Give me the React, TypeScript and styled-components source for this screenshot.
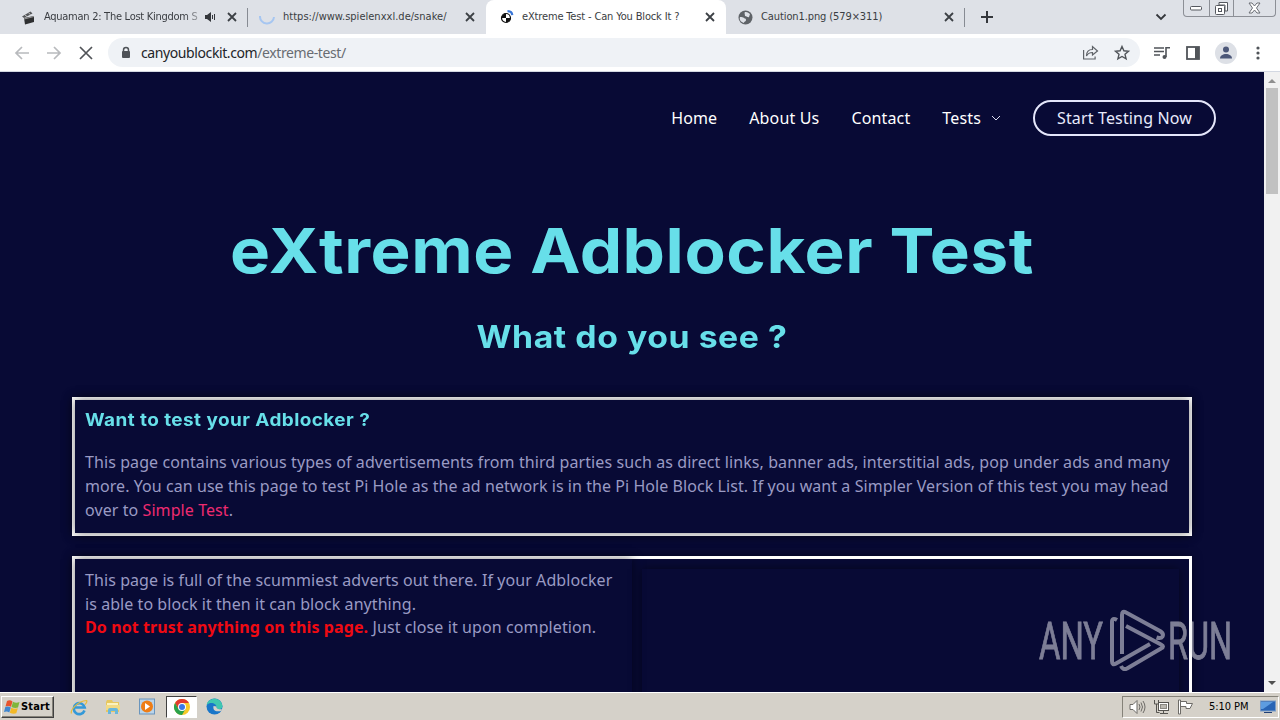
import * as React from 'react'
import styled, { createGlobalStyle } from 'styled-components'

const GlobalStyle = createGlobalStyle`
    * { box-sizing: border-box; }
    html, body { margin: 0; padding: 0; overflow: hidden; }
    body { font-family: 'Noto Sans', sans-serif; }
`

const Screen = styled.div`
    display: flex;
    flex-direction: column;
    width: 1280px;
    height: 720px;
    overflow: hidden;
    background: #080a35;
`

const TabStrip = styled.div`
    display: flex;
    height: 34px;
    flex: none;
    background: #dee1e7;
`

const Tab = styled.div<{ $width: number; $left?: number; $active?: boolean; $divider?: boolean }>`
    position: relative;
    display: flex;
    align-items: center;
    width: ${p => p.$width}px;
    height: 34px;
    padding: 0 11px 0 ${p => p.$left ?? 12}px;
    background: ${p => (p.$active ? '#fff' : 'transparent')};
    border-radius: ${p => (p.$active ? '8px 8px 0 0' : '0')};

    &::after {
        content: '';
        display: ${p => (p.$divider ? 'block' : 'none')};
        position: absolute;
        right: 0;
        top: 8px;
        width: 1px;
        height: 19px;
        background: #878b93;
    }
`

const TabTitle = styled.span<{ $spacing?: number; $fade?: boolean }>`
    flex: 1;
    margin-left: 8px;
    overflow: hidden;
    white-space: nowrap;
    font: 11px/20px 'DejaVu Sans Condensed', 'DejaVu Sans', sans-serif;
    letter-spacing: ${p => p.$spacing ?? 0}px;
    color: #3a3d42;
    ${p => p.$fade && 'mask-image: linear-gradient(to right, #000 88%, transparent);'}
`

const Audio = styled.span`
    display: flex;
    margin-right: 10px;
`

const StripEnd = styled.div`
    display: flex;
    flex: 1;
    align-items: center;
    justify-content: space-between;
    padding: 0 16px 0 15px;
`

const WindowButtons = styled.div`
    display: flex;
    width: 93px;
    height: 17px;
    margin-right: 4px;
    border: 1px solid #8c8f96;
    border-top: 0;
    border-radius: 0 0 4px 4px;
`

const WindowButton = styled.div<{ $width: number }>`
    display: flex;
    align-items: center;
    justify-content: center;
    width: ${p => p.$width}px;

    & + & { border-left: 1px solid #8c8f96; }
`

const Toolbar = styled.div`
    display: flex;
    align-items: center;
    height: 38px;
    flex: none;
    padding: 0 8px 0 13px;
    background: #fff;
    border-bottom: 1px solid #d3d8e2;
`

const NavIcons = styled.div`
    display: flex;
    flex: none;
    gap: 14px;
    width: 95px;
`

const AddressBar = styled.div`
    display: flex;
    flex: none;
    align-items: center;
    width: 1032px;
    height: 29px;
    padding: 0 9px 0 12px;
    border-radius: 15px;
    background: #eff2f6;
`

const Url = styled.span`
    flex: 1;
    margin-left: 9px;
    font: 14px/20px 'Noto Sans', sans-serif;
    letter-spacing: -0.4px;
    color: #222428;
`

const UrlPath = styled.span`
    color: #686c72;
`

const AddressIcons = styled.div`
    display: flex;
    gap: 14px;
`

const ToolIcons = styled.div`
    display: flex;
    align-items: center;
    margin-left: 13px;
    gap: 14px;
`

const Viewport = styled.div`
    display: flex;
    flex: 1;
    min-height: 0;
`

const Page = styled.main`
    flex: 1;
    overflow: hidden;
    background: #080a35;
`

const Nav = styled.nav`
    display: flex;
    align-items: center;
    justify-content: flex-end;
    height: 92px;
    padding-right: 48px;
    color: #fff;
    font-size: 16px;
    line-height: 24px;
    letter-spacing: 0.15px;
`

const NavLink = styled.a`
    display: flex;
    align-items: center;
    gap: 10px;
    margin-right: 32px;
`

const StartButton = styled.a`
    width: 183px;
    height: 36px;
    border: 2px solid #e4e6fa;
    border-radius: 18px;
    color: #e9eafc;
    line-height: 32px;
    text-align: center;
`

const Title = styled.h1`
    margin: 42px 0 0;
    font: 700 62px/90px Inter, sans-serif;
    letter-spacing: 0.5px;
    text-align: center;
    color: #67dfe9;
    transform: scaleX(1.086);
`

const Subtitle = styled.h2`
    margin: 19px 0 38px;
    font: 700 31px/44px Inter, sans-serif;
    letter-spacing: 0.5px;
    text-align: center;
    color: #67dfe9;
    transform: scaleX(1.09);
`

const Box = styled.section<{ $height: number }>`
    display: flex;
    width: 1120px;
    height: ${p => p.$height}px;
    margin: 0 auto 20px 72px;
    border: 3px solid #fff;
    box-shadow: 0 0 10px rgba(0, 0, 0, 0.4);
`

const Panel = styled.div<{ $inset?: boolean }>`
    flex: 1;
    margin: ${p => (p.$inset ? '10px' : '0')};
    padding: ${p => (p.$inset ? '0' : '9px 10px')};
    box-shadow: 0 0 10px rgba(0, 0, 0, 0.5);
    color: #9a9bc4;
    font-size: 16px;
    line-height: 24px;
    white-space: nowrap;
`

const BoxTitle = styled.h3`
    margin: -1px 0 18px;
    font: 700 17.5px/24px Inter, sans-serif;
    letter-spacing: 0.4px;
    color: #67dfe9;
    transform: scaleX(1.083);
    transform-origin: left;
`

const Line = styled.div<{ $spacing?: number; $up?: number }>`
    margin-top: ${p => -(p.$up ?? 0)}px;
    letter-spacing: ${p => p.$spacing ?? 0.08}px;
`

const Simple = styled.a`
    color: #ef2b70;
`

const Warning = styled.strong`
    color: #f00a12;
`

const Scrollbar = styled.div`
    display: flex;
    flex-direction: column;
    align-items: center;
    justify-content: space-between;
    width: 16px;
    background: #f1f1f1;
`

const ScrollTop = styled.div`
    display: flex;
    flex-direction: column;
    align-items: center;
`

const ScrollThumb = styled.div`
    width: 12px;
    height: 106px;
    background: #c1c1c1;
`

const Watermark = styled.svg`
    position: absolute;
    left: 1030px;
    top: 600px;
    opacity: 0.5;
`

const Taskbar = styled.footer`
    display: flex;
    align-items: center;
    height: 28px;
    flex: none;
    border-top: 1px solid #fff;
    background: #d5d1c9;
`

const StartMenu = styled.div`
    display: flex;
    align-items: center;
    gap: 1px;
    width: 53px;
    height: 22px;
    margin: 0 8px 0 1px;
    padding-left: 2px;
    border: 1px solid;
    border-color: #fff #404040 #404040 #fff;
    box-shadow: inset -1px -1px #858279;
    font: 700 11px/20px 'DejaVu Sans Condensed', sans-serif;
    letter-spacing: 0.15px;
    color: #000;
`

const TaskButton = styled.div<{ $active?: boolean }>`
    display: flex;
    align-items: center;
    justify-content: center;
    width: ${p => (p.$active ? 31 : 33)}px;
    height: 22px;
    margin: 0 1px 0 0;
    ${p => p.$active && `
        margin-left: 2px;
        background: #fff;
        border: 1px solid;
        border-color: #404040 #fff #fff #404040;
    `}
`

const Tray = styled.div`
    display: flex;
    align-items: center;
    gap: 7px;
    width: 157px;
    height: 22px;
    margin: 0 1px 0 auto;
    padding-left: 6px;
    border: 1px solid;
    border-color: #858279 #fff #fff #858279;
`

const Clock = styled.span`
    width: 44px;
    margin-left: 8px;
    font: 11px/20px 'DejaVu Sans Condensed', sans-serif;
    letter-spacing: -0.05px;
    white-space: nowrap;
    color: #000;
`

const CloseIcon = () => (
    <svg width="10" height="10" viewBox="0 0 10 10" stroke="#3c4045" strokeWidth="1.8">
        <path d="M1 1l8 8M9 1l-8 8" />
    </svg>
)

const ClapperIcon = () => (
    <svg width="15" height="15" viewBox="0 0 15 15">
        <path d="M3 8l10-2v6l-9 2.500z" fill="#2e2f31" />
        <path d="M1 6.500L9.500 1.500l2 2L3 8z" fill="#55575a" />
        <path d="M4 5l2 1.500M7.500 3l2 1.500" stroke="#c5c5c5" />
        <path d="M3 9l10-2.500" stroke="#999" />
    </svg>
)

const SpeakerIcon = () => (
    <svg width="12" height="12" viewBox="0 0 12 12" fill="#34373c">
        <path d="M0 4h2l4-3v10L2 8H0z" />
        <path d="M7.500 4v4M9.500 3v6" stroke="#34373c" strokeWidth="1" />
    </svg>
)

const SpinnerIcon = () => (
    <svg width="16" height="16" viewBox="0 0 16 16" fill="none">
        <path d="M1 7a7 7 0 1 0 14 1" stroke="#a6c6f1" strokeWidth="2" />
    </svg>
)

const ShieldIcon = () => (
    <svg width="14" height="16" viewBox="0 0 14 16">
        <circle cx="6" cy="9" r="4.500" fill="#fff" stroke="#111" strokeWidth="1.200" />
        <path d="M6 4.500V9H1.500A4.500 4.500 0 0 1 6 4.500zM6 9h4.500A4.500 4.500 0 0 1 6 13.500z" fill="#111" />
        <path d="M7.500 2.200c3 0 4.500 1.500 4.800 4" stroke="#3a77d8" strokeWidth="2.200" fill="none" />
    </svg>
)

const GlobeIcon = () => (
    <svg width="15" height="15" viewBox="0 0 15 15">
        <circle cx="7.500" cy="7.500" r="7" fill="#5f6368" />
        <path d="M2 7c2 0 3 0 4 1s2 0 2 2-2 1-2 3c-3-1-5-3-4-6zM7 2c2-.5 4 1 5 2l-1 3c-1 1-2-1-4-1 0-2-1-3 0-4z" fill="#dee1e7" />
    </svg>
)

const ArrowIcon = ({ flip }: { flip?: boolean }) => (
    <svg width="18" height="18" viewBox="0 0 18 18" fill="none" stroke="#b8babd" strokeWidth="1.700">
        <path d={flip ? 'M2 9h13M9 3l6 6-6 6' : 'M16 9H3M9 3L3 9l6 6'} />
    </svg>
)

const StopIcon = () => (
    <svg width="18" height="18" viewBox="0 0 18 18" stroke="#505357" strokeWidth="1.700">
        <path d="M3 3l12 12M15 3L3 15" />
    </svg>
)

const LockIcon = () => (
    <svg width="12" height="14" viewBox="0 0 12 14">
        <path d="M3.500 6V4a2.500 2.500 0 0 1 5 0v2" fill="none" stroke="#4f5358" strokeWidth="1.500" />
        <rect x="2" y="5" width="8" height="7" rx="1" fill="#4f5358" />
    </svg>
)

const ShareIcon = () => (
    <svg width="17" height="17" viewBox="0 0 17 17" fill="none" stroke="#5f6368" strokeWidth="1.200">
        <path d="M1.600 6v9h11.500v-2.500" />
        <path d="M4.500 12c0-4.500 2-6.500 6-6.500V2.500l5 4.500-5 4V8.500c-3 0-4.500.5-6 3.500z" />
    </svg>
)

const StarIcon = () => (
    <svg width="18" height="18" viewBox="0 0 18 18" fill="none" stroke="#505459" strokeWidth="1.400">
        <path d="M9 2.500l1.900 4.300 4.600.4-3.500 3.100 1.100 4.600L9 12.500l-4.100 2.400L6 10.300 2.500 7.200l4.600-.4z" />
    </svg>
)

const PlaylistIcon = () => (
    <svg width="18" height="16" viewBox="0 0 18 16" fill="none" stroke="#505459" strokeWidth="1.600">
        <path d="M1 3h10M1 6.500h10M1 10h6M13 12V2.800h4" />
        <circle cx="11.500" cy="12" r="2" fill="#505459" stroke="none" />
    </svg>
)

const SidePanelIcon = () => (
    <svg width="16" height="16" viewBox="0 0 16 16">
        <rect x="2" y="2" width="12" height="12" fill="none" stroke="#505459" strokeWidth="1.800" />
        <rect x="10" y="2" width="4" height="12" fill="#505459" />
    </svg>
)

const ProfileIcon = () => (
    <svg width="22" height="22" viewBox="0 0 22 22">
        <circle cx="11" cy="11" r="11" fill="#dde0e6" />
        <circle cx="11" cy="7.500" r="3" fill="#4d5879" />
        <path d="M5 16.500c0-6 12-6 12 0z" fill="#4d5879" />
    </svg>
)

const DotsIcon = () => (
    <svg width="14" height="16" viewBox="0 0 14 16" fill="#505459">
        <circle cx="7" cy="3" r="1.600" />
        <circle cx="7" cy="8" r="1.600" />
        <circle cx="7" cy="13" r="1.600" />
    </svg>
)

const WindowsIcon = () => (
    <svg width="16" height="16" viewBox="0 0 16 16">
        <path d="M3 2q3-1.500 5.500.5L7 7.800Q4.500 6.500 1.500 7.500z" fill="#e6532d" />
        <path d="M9 2.800q3 1.500 6.500.3L14 8.500q-3 1-6.500-.5z" fill="#7fb63b" />
        <path d="M1.300 8q3-1 5.500.5l-1.500 5Q3 12 0 13z" fill="#3f86cf" />
        <path d="M7.300 8.800q3 1.500 6.500.5l-1.500 5q-3 1-6.500-.5z" fill="#f3b927" />
    </svg>
)

const ExplorerIcon = () => (
    <svg width="18" height="18" viewBox="0 0 18 18" fill="none">
        <path d="M14.500 12.500a5.500 5.500 0 1 1 .2-3H5" stroke="#3499d8" strokeWidth="2.600" />
        <path d="M1.500 15.500C0 12 8 3 16.500 2.500c1 1-.5 3-1.500 4" stroke="#e5bc3c" strokeWidth="1.200" />
    </svg>
)

const FolderIcon = () => (
    <svg width="18" height="18" viewBox="0 0 18 18">
        <path d="M2 4l1-2h5l1 2h6v10H2z" fill="#e7c75f" />
        <path d="M3 5h11v3H3z" fill="#fbf2bf" />
        <path d="M2 7h14v5H2z" fill="#f2da85" />
        <path d="M4 16v-4q0-2 2-2h6q2 0 2 2v4h-3v-3H7v3z" fill="#69b7dc" />
    </svg>
)

const PlayerIcon = () => (
    <svg width="16" height="17" viewBox="0 0 16 17">
        <rect x="0.500" y="1" width="15" height="15" fill="#b9d4ea" stroke="#6a95bd" />
        <circle cx="8" cy="8.500" r="6" fill="#ee7d16" />
        <path d="M6 5v7l5-3.500z" fill="#fff" />
    </svg>
)

const ChromeIcon = () => (
    <svg width="16" height="16" viewBox="0 0 16 16">
        <circle cx="8" cy="8" r="8" fill="#f7c928" />
        <path d="M1.070 4A8 8 0 0 1 14.930 4H8L4.500 10z" fill="#e33b2e" />
        <path d="M1.070 4A8 8 0 0 0 8 16l3.500-6L4.500 10z" fill="#2ba24c" />
        <circle cx="8" cy="8" r="4" fill="#fff" />
        <circle cx="8" cy="8" r="3" fill="#3a78e8" />
    </svg>
)

const EdgeIcon = () => (
    <svg width="17" height="17" viewBox="0 0 17 17">
        <circle cx="8.500" cy="8.500" r="8" fill="#1976c9" />
        <path d="M.7 7C2-1 15-2 16.500 8c0 4-6 4-6 1.500C11 6 5 3 .7 7z" fill="#3fc7b0" />
        <path d="M7.500 8c-1 5 3 6.500 8.500 4.500l-.5-1.500c-3 .5-5.500 0-5-2.500z" fill="#d5d1c9" />
    </svg>
)

const VolumeIcon = () => (
    <svg width="17" height="16" viewBox="0 0 17 16" fill="none" stroke="#6d6b67">
        <path d="M1 5.500h3l4-4v13l-4-4H1z" fill="#fff" />
        <path d="M10 5q2 3 0 6M12 3.500q3 4.500 0 9M14 2q4 6 0 12" />
    </svg>
)

const NetworkIcon = () => (
    <svg width="17" height="16" viewBox="0 0 17 16" fill="#fff" stroke="#55534f">
        <rect x="5.500" y="3.500" width="10" height="8" />
        <rect x="7.500" y="5.500" width="6" height="4" fill="#bbb8b1" stroke="#8a8882" />
        <path d="M7 14.500h8M10.500 12v2" />
        <path d="M1.500 1v4h4V1M3.500 5v8.500h3" fill="none" />
    </svg>
)

const FlagIcon = () => (
    <svg width="17" height="16" viewBox="0 0 17 16" fill="#fff" stroke="#6d6b67">
        <path d="M3.500 2.500h6v2h6l-2.500 5H9v-2H3.500z" />
        <path d="M1.500 1v14h2V1z" />
    </svg>
)

const DesktopIcon = () => (
    <svg width="16" height="14" viewBox="0 0 16 14">
        <rect x="0.500" y="1" width="15" height="10" fill="#2864b5" stroke="#7b9cc6" />
        <path d="M1 2h12L3 9H1z" fill="#5d9ce0" />
        <path d="M4 12.500h8" stroke="#1f3f76" />
    </svg>
)

const tabs = [
    { title: 'Aquaman 2: The Lost Kingdom S', width: 248, left: 21, icon: <ClapperIcon />, spacing: -0.27, audio: true, divider: true },
    { title: 'https://www.spielenxxl.de/snake/', width: 238, left: 11, icon: <SpinnerIcon />, spacing: 0.02 },
    { title: 'eXtreme Test - Can You Block It ?', width: 240, left: 14, icon: <ShieldIcon />, spacing: -0.15, active: true },
    { title: 'Caution1.png (579×311)', width: 239, icon: <GlobeIcon />, spacing: -0.1, divider: true },
]

const BrowserTabs = () => (
    <TabStrip>
        {tabs.map(tab => (
            <Tab key={tab.title} $width={tab.width} $left={tab.left} $active={tab.active} $divider={tab.divider}>
                {tab.icon}
                <TabTitle $spacing={tab.spacing} $fade={tab.audio}>{tab.title}</TabTitle>
                {tab.audio && <Audio><SpeakerIcon /></Audio>}
                <CloseIcon />
            </Tab>
        ))}
        <StripEnd>
            <svg width="14" height="14" viewBox="0 0 14 14" stroke="#34373c" strokeWidth="2">
                <path d="M7 1v12M1 7h12" />
            </svg>
            <svg width="12" height="10" viewBox="0 0 12 10" fill="none" stroke="#34373c" strokeWidth="1.800">
                <path d="M1.500 2.500L6 7l4.500-4.500" />
            </svg>
        </StripEnd>
        <WindowButtons>
            <WindowButton $width={25}>
                <svg width="13" height="6" viewBox="0 0 13 6"><rect x="0.500" y="1.500" width="11" height="3.500" rx="1" fill="#fff" stroke="#55585f" /></svg>
            </WindowButton>
            <WindowButton $width={25}>
                <svg width="13" height="13" viewBox="0 0 13 13" fill="#fff" stroke="#55585f">
                    <path d="M4 .5h8.500V9H10V3H4z" />
                    <rect x="0.500" y="3.500" width="9" height="9" rx="1" />
                    <rect x="3.500" y="6.500" width="3" height="3" />
                </svg>
            </WindowButton>
            <WindowButton $width={42}>
                <svg width="13" height="12" viewBox="0 0 13 12" fill="#fff" stroke="#6b6e75">
                    <path d="M1 1h3l2.500 3L9 1h3L8.500 6l3.500 5H9L6.500 8 4 11H1l3.500-5z" />
                </svg>
            </WindowButton>
        </WindowButtons>
    </TabStrip>
)

const BrowserToolbar = () => (
    <Toolbar>
        <NavIcons>
            <ArrowIcon />
            <ArrowIcon flip />
            <StopIcon />
        </NavIcons>
        <AddressBar>
            <LockIcon />
            <Url>canyoublockit.com<UrlPath>/extreme-test/</UrlPath></Url>
            <AddressIcons>
                <ShareIcon />
                <StarIcon />
            </AddressIcons>
        </AddressBar>
        <ToolIcons>
            <PlaylistIcon />
            <SidePanelIcon />
            <ProfileIcon />
            <DotsIcon />
        </ToolIcons>
    </Toolbar>
)

const App: React.FC = () => {
    return (
        <Screen>
            <GlobalStyle />
            <BrowserTabs />
            <BrowserToolbar />
            <Viewport>
                <Page>
                    <Nav>
                        <NavLink>Home</NavLink>
                        <NavLink>About Us</NavLink>
                        <NavLink>Contact</NavLink>
                        <NavLink>
                            Tests
                            <svg width="10" height="6" viewBox="0 0 10 6" fill="none" stroke="#dcdcf0">
                                <path d="M1 1l4 4 4-4" />
                            </svg>
                        </NavLink>
                        <StartButton>Start Testing Now</StartButton>
                    </Nav>
                    <Title>eXtreme Adblocker Test</Title>
                    <Subtitle>What do you see ?</Subtitle>
                    <Box $height={139}>
                        <Panel>
                            <BoxTitle>Want to test your Adblocker ?</BoxTitle>
                            <Line $spacing={0.09}>This page contains various types of advertisements from third parties such as direct links, banner ads, interstitial ads, pop under ads and many</Line>
                            <Line $spacing={0.06}>more. You can use this page to test Pi Hole as the ad network is in the Pi Hole Block List. If you want a Simpler Version of this test you may head</Line>
                            <Line>over to <Simple>Simple Test</Simple>.</Line>
                        </Panel>
                    </Box>
                    <Box $height={400}>
                        <Panel>
                            <Line>This page is full of the scummiest adverts out there. If your Adblocker</Line>
                            <Line $spacing={0.06}>is able to block it then it can block anything.</Line>
                            <Line $spacing={0.1} $up={1}><Warning>Do not trust anything on this page.</Warning> Just close it upon completion.</Line>
                        </Panel>
                        <Panel $inset />
                    </Box>
                </Page>
                <Scrollbar>
                    <ScrollTop>
                        <svg width="16" height="16" viewBox="0 0 16 16"><path d="M4 11l4-4 4 4z" fill="#8f8f8f" /></svg>
                        <ScrollThumb />
                    </ScrollTop>
                    <svg width="16" height="16" viewBox="0 0 16 16"><path d="M4 5l4 4 4-4z" fill="#505050" /></svg>
                </Scrollbar>
            </Viewport>
            <Taskbar>
                <StartMenu><WindowsIcon />Start</StartMenu>
                <TaskButton><ExplorerIcon /></TaskButton>
                <TaskButton><FolderIcon /></TaskButton>
                <TaskButton><PlayerIcon /></TaskButton>
                <TaskButton $active><ChromeIcon /></TaskButton>
                <TaskButton><EdgeIcon /></TaskButton>
                <Tray>
                    <VolumeIcon />
                    <NetworkIcon />
                    <FlagIcon />
                    <Clock>5:10 PM</Clock>
                    <DesktopIcon />
                </Tray>
            </Taskbar>
            <Watermark width="230" height="90" viewBox="0 -4 230 90">
                <g fill="#f2f2f6" stroke="#f2f2f6" strokeWidth="0.8" fontFamily="Roboto, sans-serif" fontSize="51">
                    <text x="9" y="55" textLength="64" lengthAdjust="spacingAndGlyphs">ANY</text>
                    <text x="138" y="55" textLength="64" lengthAdjust="spacingAndGlyphs">RUN</text>
                </g>
                <g fill="none" stroke="#f2f2f6" strokeWidth="4" strokeLinejoin="round">
                    <path d="M87 16q-5-3-5 2v39q0 5 4 2.500l34-19.500" />
                    <path d="M92 50V11q0-5 4-2.500L130 27q4 2.500 2.500 5.500-1.500 2.500-6 1" />
                    <path d="M96 22l35 18.500q4 2 0 4L97 64.500q-4 2-6-2.500" />
                </g>
            </Watermark>
        </Screen>
    )
}

export default App
